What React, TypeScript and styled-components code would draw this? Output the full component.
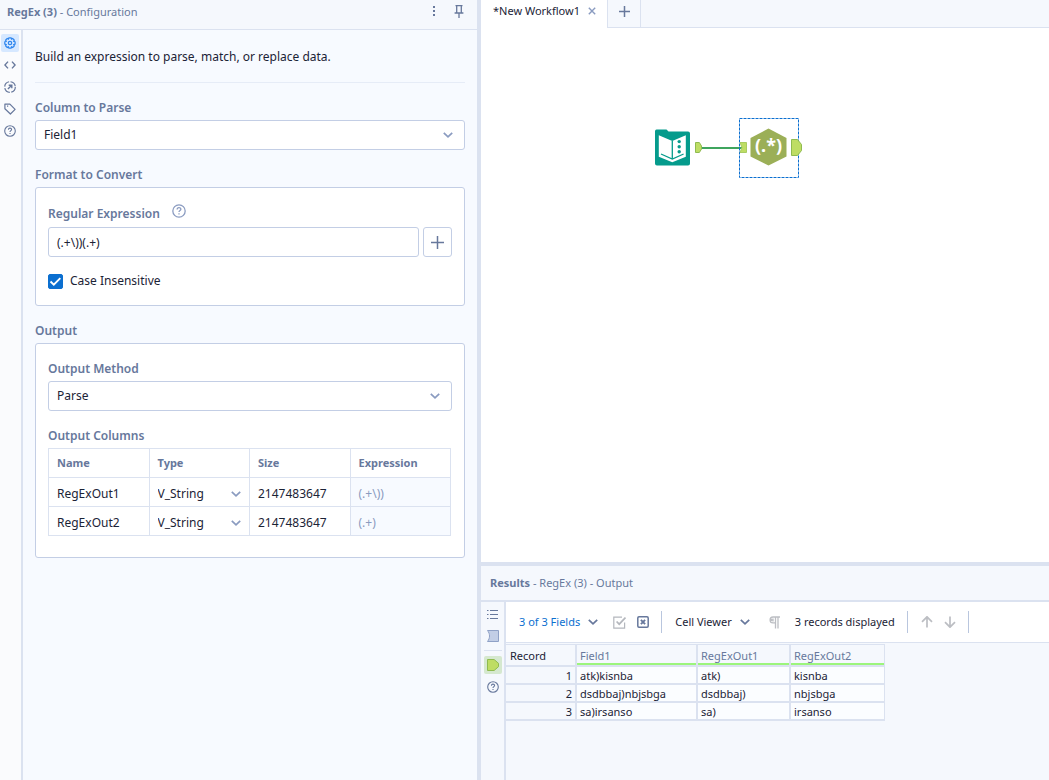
import React, { useState } from "react";
import styled, { createGlobalStyle, css } from "styled-components";

const c = {
  line: "#dbe2f0",
  field: "#c3cee5",
  panel: "#f5f8fd",
  pane: "#f7faff",
  label: "#67789c",
  text: "#1b2336",
  muted: "#8a9bc0",
  blue: "#0b6fd0",
};

const GlobalStyle = createGlobalStyle`
  * { box-sizing: border-box; }
  body {
    margin: 0;
    color: ${c.text};
    background: ${c.panel};
    font-family: "Noto Sans", "Open Sans", sans-serif;
    font-size: 12px;
    line-height: 18px;
  }
  button, input, select { font: inherit; color: inherit; margin: 0; }
  svg { display: block; flex: none; }
`;

const Page = styled.div`
  display: flex;
  min-height: 100vh;
`;

/* ---------- configuration panel ---------- */

const ConfigPanel = styled.section`
  flex: 0 0 481px;
  display: flex;
  flex-direction: column;
  border-right: 4px solid ${c.line};
  background: ${c.pane};
`;

const ConfigHeader = styled.header`
  display: flex;
  align-items: center;
  gap: 18px;
  height: 30px;
  padding: 0 13px 6px 7px;
  border-bottom: 1px solid ${c.line};
  background: ${c.panel};
  color: ${c.label};
`;

const PanelTitle = styled.h2`
  flex: 1;
  margin: 0;
  font-size: 11px;
  font-weight: 400;
  strong { font-weight: 700; }
`;

const IconButton = styled.button<{ $color?: string }>`
  display: flex;
  align-items: center;
  justify-content: center;
  padding: 0;
  border: 0;
  background: none;
  color: ${(p) => p.$color ?? c.label};
`;

const ConfigBody = styled.div`
  flex: 1;
  display: flex;
`;

const Rail = styled.nav<{ $wide?: boolean }>`
  display: flex;
  flex-direction: column;
  align-items: center;
  gap: 4px;
  flex: none;
  width: ${(p) => (p.$wide ? 25 : 23)}px;
  padding: ${(p) => (p.$wide ? "3px 0 0" : "4px 2px 0 0")};
  border-right: 2px solid ${c.line};
  background: ${(p) => (p.$wide ? c.panel : "#fafbfd")};
`;

const RailButton = styled(IconButton)<{ $tint?: string }>`
  width: 18px;
  height: 18px;
  border-radius: 2px;
  background: ${(p) => p.$tint ?? "none"};
`;

const RailRule = styled.hr`
  width: 18px;
  margin: 1px 0;
  border: 0;
  border-top: 1px solid ${c.line};
`;

const Form = styled.form`
  flex: 1;
  min-width: 0;
  padding: 17px 12px;
`;

const Intro = styled.p`
  margin: 0 0 16px;
  padding-bottom: 15px;
  border-bottom: 1px solid #e6ecf7;
  line-height: 20px;
`;

const labelText = css`
  display: block;
  margin: 0 0 3px;
  padding: 0;
  color: ${c.label};
  font-size: 12px;
  font-weight: 600;
  line-height: 18px;
`;

const Label = styled.label`${labelText}`;
const Heading = styled.h3`${labelText}`;

const LabelRow = styled.div`
  display: flex;
  align-items: flex-start;
  gap: 12px;
  height: 23px;
  label { padding-top: 1px; }
`;

const Group = styled.section`
  margin-bottom: 16px;
`;

const Card = styled.div`
  padding: 15px 12px;
  border: 1px solid ${c.field};
  border-radius: 3px;
  background: #fff;
  padding: 16px 12px 15px;
`;

const SelectWrap = styled.div`
  position: relative;
  margin-bottom: 16px;
  svg {
    position: absolute;
    right: 12px;
    top: 10px;
    pointer-events: none;
    color: ${c.muted};
  }
`;

const box = css`
  height: 30px;
  padding: 0 8px;
  border: 1px solid ${c.field};
  border-radius: 3px;
  background: #fff;
`;

const Select = styled.select`
  ${box}
  display: block;
  width: 100%;
  appearance: none;
`;

const InputRow = styled.div`
  display: flex;
  gap: 4px;
  margin-bottom: 15px;
`;

const TextInput = styled.input`
  ${box}
  flex: 1;
  min-width: 0;
`;

const AddButton = styled.button`
  ${box}
  display: flex;
  align-items: center;
  justify-content: center;
  width: 29px;
  padding: 0;
  color: ${c.label};
`;

const CheckLabel = styled.label`
  display: flex;
  align-items: center;
  gap: 7px;
  height: 18px;
`;

const Checkbox = styled.input`
  appearance: none;
  width: 15px;
  height: 15px;
  border-radius: 2px;
  background: #fff;
  border: 1px solid ${c.field};
  &:checked {
    border-color: ${c.blue};
    background: ${c.blue};
  }
`;

const CheckBoxHolder = styled.span`
  position: relative;
  display: flex;
  color: #fff;
  svg { position: absolute; left: 0; top: 0; pointer-events: none; }
`;

const ColumnsTable = styled.table`
  width: calc(100% - 1px);
  margin-bottom: 6px;
  border-collapse: collapse;
  table-layout: fixed;
  th, td {
    height: 29px;
    padding: 0 8px;
    border: 1px solid ${c.line};
    text-align: left;
  }
  th { color: ${c.label}; font-size: 11px; font-weight: 700; }
  td { padding-top: 4px; }
  td:last-child { background: ${c.pane}; color: ${c.muted}; }
`;

const CellInput = styled.input`
  display: block;
  width: 100%;
  padding: 0;
  border: 0;
  background: none;
`;

const CellSelect = styled.div`
  position: relative;
  select {
    display: block;
    width: 100%;
    padding: 0;
    border: 0;
    appearance: none;
    background: none;
  }
  svg {
    position: absolute;
    right: 0;
    top: 4px;
    pointer-events: none;
    color: ${c.muted};
  }
`;

/* ---------- workflow ---------- */

const Main = styled.main`
  flex: 1;
  min-width: 0;
  display: flex;
  flex-direction: column;
`;

const TabBar = styled.div`
  display: flex;
  height: 28px;
  background: ${c.panel};
`;

const Tab = styled.div`
  display: flex;
  align-items: flex-start;
  gap: 8px;
  padding: 2px 11px 0 12px;
  background: #fff;
  font-size: 11px;
  button { height: 18px; }
`;

const NewTab = styled.button`
  display: flex;
  align-items: center;
  justify-content: center;
  width: 34px;
  padding: 0 0 4px;
  border: solid ${c.line};
  border-width: 0 1px 1px;
  background: ${c.panel};
  color: ${c.label};
`;

const TabFill = styled.div`
  flex: 1;
  border-bottom: 1px solid ${c.line};
`;

const Canvas = styled.div`
  position: relative;
  flex: 1;
  min-height: 200px;
  background: #fff;
`;

const Item = styled.div<{ $x: number; $y: number }>`
  position: absolute;
  left: ${(p) => p.$x}px;
  top: ${(p) => p.$y}px;
`;

/* ---------- results ---------- */

const Results = styled.section`
  display: flex;
  flex-direction: column;
  height: 218px;
  border-top: 4px solid ${c.line};
  background: ${c.panel};
`;

const ResultsHeader = styled.header`
  display: flex;
  align-items: center;
  height: 36px;
  padding: 0 9px;
  border-bottom: 2px solid ${c.line};
  color: ${c.label};
`;

const ResultsBody = styled.div`
  flex: 1;
  display: flex;
`;

const ResultsMain = styled.div`
  flex: 1;
  min-width: 0;
`;

const Toolbar = styled.div`
  display: flex;
  align-items: center;
  height: 41px;
  padding: 0 13px;
  border-bottom: 1px solid ${c.line};
  background: #fff;
  font-size: 11px;
  white-space: nowrap;
`;

const DropButton = styled.button<{ $accent?: boolean }>`
  display: flex;
  align-items: center;
  gap: 8px;
  margin-right: 4px;
  padding: 0;
  border: 0;
  background: none;
  color: ${(p) => (p.$accent ? c.blue : c.text)};
  svg { color: ${c.label}; }
`;

const ToolGroup = styled.div<{ $gap: number }>`
  display: flex;
  align-items: center;
  gap: ${(p) => p.$gap}px;
  padding-right: 12px;
  margin-right: 13px;
  height: 22px;
  border-right: 1px solid #b9c6de;
`;

const DataTable = styled.table`
  margin-top: 1px;
  border-collapse: separate;
  border-spacing: 0;
  table-layout: fixed;
  width: 379px;
  font-size: 11px;
  line-height: 15px;
  th, td {
    height: 18px;
    padding: 1px 3px 0;
    border: solid ${c.line};
    border-width: 0 2px 2px 0;
    background: #fbfdff;
    text-align: left;
    font-weight: 400;
    overflow: hidden;
  }
  thead th {
    height: 23px;
    border-top-width: 1px;
    background: ${c.panel};
    color: ${c.label};
    box-shadow: inset 0 -2px 0 #9cf57c;
  }
  thead th:first-child { padding-left: 4px; color: ${c.text}; box-shadow: none; }
  tbody th { background: ${c.panel}; text-align: right; }
  th:last-child, td:last-child { border-right-width: 1px; }
`;

/* ---------- icons ---------- */

const Svg = ({ w = 12, h = w, sw = 1.3, children }: { w?: number; h?: number; sw?: number; children: React.ReactNode }) => (
  <svg width={w} height={h} viewBox={`0 0 ${w} ${h}`} fill="none" stroke="currentColor" strokeWidth={sw} aria-hidden="true">
    {children}
  </svg>
);

const Chevron = () => (
  <Svg w={10} sw={1.7}><path d="M.8 2.8 5 6.900 9.200 2.800" /></Svg>
);
const Plus = ({ size = 13 }: { size?: number }) => (
  <Svg w={size} sw={1.5}><path d={`M${size / 2} 0V${size}M0 ${size / 2}H${size}`} /></Svg>
);
const Help = ({ size = 12 }: { size?: number }) => (
  <svg width={size} height={size} viewBox="0 0 12 12" fill="none" stroke="currentColor" strokeWidth="1.1" aria-hidden="true">
    <circle cx="6" cy="6" r="5.3" />
    <path d="M4.4 4.8c0-2.3 3.2-2.1 3.2-.3 0 1.1-1.6 1.1-1.6 2.4M6 7.9v1.2" />
  </svg>
);
const Gear = () => (
  <Svg w={12} sw={1.2}>
    <path d="M4.9.8h2.2l.4 1.3 1.2-.6 1.6 1.6-.6 1.2 1.4.5v2.3l-1.4.5.6 1.2-1.6 1.6-1.2-.6-.4 1.4H4.900l-.5-1.400-1.200.6-1.600-1.600.6-1.200-1.400-.5V4.800l1.400-.5-.6-1.200 1.600-1.600 1.200.6z" />
    <circle cx="6" cy="6" r="1.7" />
  </Svg>
);
const Code = () => (
  <Svg w={12} sw={1.4}><path d="M4 2.6.9 6 4 9.4M8 2.6 11.100 6 8 9.4" /></Svg>
);
const Target = () => (
  <Svg w={12} sw={1.2}>
    <circle cx="6" cy="6" r="5.3" strokeDasharray="6.800 1.5" />
    <path d="M3.900 8.100 7.500 4.500M4.700 4.200h3.100v3.100" strokeWidth="1.4" />
  </Svg>
);
const Tag = () => (
  <Svg w={12} sw={1.2}><path d="M.9 1.100h5l5.200 5.200-4.700 4.700L.9 5.800z" strokeLinejoin="round" /><path d="M3 3.200h1.200" /></Svg>
);
const Pin = () => (
  <Svg w={10} h={13} sw={1.3}><path d="M1.500.7h7M2.700.7v7M7.300.7v7M.6 8h8.800M5 8v5" /></Svg>
);
const Dots = () => (
  <svg width="4" height="11" viewBox="0 0 4 11" fill="currentColor" aria-hidden="true">
    <path d="M1 0h2v2H1zM1 4h2v2H1zM1 8h2v2H1z" />
  </svg>
);
const Close = () => (
  <Svg w={8} sw={1.4}><path d="m.8.8 6.400 6.400M7.200.8.8 7.200" /></Svg>
);
const Tick = () => (
  <Svg w={15} sw={1.9}><path d="m2.500 7.500 3.300 3.200 6.500-6.500" /></Svg>
);
const List = () => (
  <Svg w={11} sw={1.1}><path d="M0 1.500h1.500M3 1.500h8M0 5.500h1.500M3 5.500h8M0 9.500h1.500M3 9.500h8" /></Svg>
);
const InAnchor = () => (
  <svg width="12" height="12" viewBox="0 0 12 12" fill="#c2cee6" stroke="#8fa1c6" aria-hidden="true">
    <path d="M.5.5h11v11H.5c2.700-3.500 2.700-7.500 0-11z" />
  </svg>
);
const OutAnchor = ({ w, h }: { w: number; h: number }) => (
  <svg width={w} height={h} viewBox={`0 0 ${w} ${h}`} fill="#bedd64" stroke="#8fbb50" aria-hidden="true">
    <path d={`M.5.5h${w * 0.55}L${w - 0.5} ${h * 0.36}v${h * 0.28}L${w * 0.55 + 0.5} ${h - 0.5}H.5z`} />
  </svg>
);
const EditCheck = () => (
  <Svg w={13} sw={1.2}><path d="M9 1.100H.8v11h10.800V6.500" /><path d="m3.600 5.500 2.600 2.700 6.300-6.700" strokeWidth="1.7" /></Svg>
);
const BoxX = () => (
  <Svg w={12} sw={1.5}><rect x=".8" y=".8" width="10.400" height="10.400" rx="1.200" /><path d="m3.900 3.900 4.200 4.200M8.100 3.900 3.900 8.100" strokeWidth="1.900" /></Svg>
);
const Pilcrow = () => (
  <Svg w={11} h={13} sw={1.3}><path d="M11 1H4a2.800 2.800 0 0 0 0 5.800h2.300M6.500 1v11.500M9 1v11.500M4 2.500v3M2.600 2.800v2.200" /></Svg>
);
const Arrow = ({ down }: { down?: boolean }) => (
  <Svg w={12} sw={1.7}><path d={down ? "M6 .5v10.500M1 6.200l5 5 5-5" : "M6 11.500V1M1 5.800l5-5 5 5"} /></Svg>
);

const InputTool = () => (
  <svg width="37" height="37" viewBox="0 0 37 37" aria-label="Text Input tool" role="img">
    <path d="M2.500.5h10l2 2h19.500q2 0 2 2v30q0 2-2 2h-31q-2 0-2-2v-32q0-2 1.500-2z" fill="#059b8c" />
    <path d="M4.800 6.200 18.300 12 31.800 6.200v21.500L18.300 33.300 4.800 27.700z" fill="#fff" />
    <path d="M7 25l11.300 5 11.300-5M18.300 12v18" fill="none" stroke="#059b8c" strokeWidth="1.300" />
    <g fill="#059b8c"><circle cx="25.200" cy="12.600" r="1.700" /><circle cx="25.200" cy="17.700" r="1.700" /><circle cx="25.200" cy="22.800" r="1.700" /></g>
  </svg>
);

const RegexTool = () => (
  <svg width="64" height="60" viewBox="0 0 64 60" aria-label="RegEx tool" role="img">
    <rect x=".5" y=".5" width="59" height="59" fill="none" stroke="#0b6fd0" strokeDasharray="3 1" />
    <path d="M1 24.500h6.500v10H1l2-5z" fill="#bedd64" stroke="#a9cc62" />
    <path d="M29.500 10.500 47.500 20v18.500L29.500 47.500 11.500 38.500V20z" fill="#9baf57" />
    <text x="29.500" y="34" textAnchor="middle" fill="#fff" fontSize="18" fontWeight="700" fontFamily="Noto Sans, sans-serif">(.*)</text>
    <path d="M52.500 21.500h6l4 5v6l-4 5h-6z" fill="#bedd64" stroke="#8fbb50" />
  </svg>
);

/* ---------- data ---------- */

const outputs = [
  { name: "RegExOut1", size: "2147483647", expr: "(.+\\))" },
  { name: "RegExOut2", size: "2147483647", expr: "(.+)" },
];

const records = [
  ["atk)kisnba", "atk)", "kisnba"],
  ["dsdbbaj)nbjsbga", "dsdbbaj)", "nbjsbga"],
  ["sa)irsanso", "sa)", "irsanso"],
];

export default function App() {
  const [pattern, setPattern] = useState("(.+\\))(.+)");
  const [insensitive, setInsensitive] = useState(true);

  return (
    <Page>
      <GlobalStyle />
      <ConfigPanel>
        <ConfigHeader>
          <PanelTitle><strong>RegEx (3)</strong> - Configuration</PanelTitle>
          <IconButton aria-label="More options"><Dots /></IconButton>
          <IconButton aria-label="Pin panel"><Pin /></IconButton>
        </ConfigHeader>
        <ConfigBody>
          <Rail>
            <RailButton aria-label="Configuration" $tint="#d6e8ff" $color="#2f86ee"><Gear /></RailButton>
            <RailButton aria-label="XML"><Code /></RailButton>
            <RailButton aria-label="Navigation"><Target /></RailButton>
            <RailButton aria-label="Annotation"><Tag /></RailButton>
            <RailButton aria-label="Help"><Help /></RailButton>
          </Rail>
          <Form onSubmit={(e) => e.preventDefault()}>
            <Intro>Build an expression to parse, match, or replace data.</Intro>
            <Label htmlFor="column">Column to Parse</Label>
            <SelectWrap>
              <Select id="column"><option>Field1</option></Select>
              <Chevron />
            </SelectWrap>
            <Group>
              <Heading>Format to Convert</Heading>
              <Card>
                <LabelRow>
                  <Label htmlFor="regex">Regular Expression</Label>
                  <IconButton type="button" aria-label="Regular expression help" $color={c.muted}><Help size={14} /></IconButton>
                </LabelRow>
                <InputRow>
                  <TextInput id="regex" value={pattern} onChange={(e) => setPattern(e.target.value)} />
                  <AddButton type="button" aria-label="Add expression"><Plus /></AddButton>
                </InputRow>
                <CheckLabel>
                  <CheckBoxHolder>
                    <Checkbox type="checkbox" checked={insensitive} onChange={(e) => setInsensitive(e.target.checked)} />
                    {insensitive && <Tick />}
                  </CheckBoxHolder>
                  Case Insensitive
                </CheckLabel>
              </Card>
            </Group>
            <Group>
              <Heading>Output</Heading>
              <Card>
                <Label htmlFor="method">Output Method</Label>
                <SelectWrap>
                  <Select id="method"><option>Parse</option></Select>
                  <Chevron />
                </SelectWrap>
                <Heading id="columns-title">Output Columns</Heading>
                <ColumnsTable aria-labelledby="columns-title">
                  <thead>
                    <tr><th>Name</th><th>Type</th><th>Size</th><th>Expression</th></tr>
                  </thead>
                  <tbody>
                    {outputs.map((o) => (
                      <tr key={o.name}>
                        <td><CellInput aria-label="Name" defaultValue={o.name} /></td>
                        <td>
                          <CellSelect>
                            <select aria-label="Type"><option>V_String</option></select>
                            <Chevron />
                          </CellSelect>
                        </td>
                        <td><CellInput aria-label="Size" defaultValue={o.size} /></td>
                        <td>{o.expr}</td>
                      </tr>
                    ))}
                  </tbody>
                </ColumnsTable>
              </Card>
            </Group>
          </Form>
        </ConfigBody>
      </ConfigPanel>

      <Main>
        <TabBar>
          <Tab>
            *New Workflow1
            <IconButton aria-label="Close tab" $color={c.muted}><Close /></IconButton>
          </Tab>
          <NewTab aria-label="New workflow"><Plus size={11} /></NewTab>
          <TabFill />
        </TabBar>
        <Canvas>
          <Item $x={173} $y={101}><InputTool /></Item>
          <Item $x={214} $y={114}><OutAnchor w={7} h={11} /></Item>
          <Item $x={221} $y={119}>
            <svg width="40" height="2" aria-hidden="true"><rect width="40" height="2" fill="#3fa55e" /></svg>
          </Item>
          <Item $x={258} $y={90}><RegexTool /></Item>
        </Canvas>
        <Results>
          <ResultsHeader>
            <PanelTitle><strong>Results</strong> - RegEx (3) - Output</PanelTitle>
          </ResultsHeader>
          <ResultsBody>
            <Rail $wide>
              <RailButton aria-label="Messages"><List /></RailButton>
              <RailButton aria-label="Input data"><InAnchor /></RailButton>
              <RailRule />
              <RailButton aria-label="Output data" $tint="#d5e8cf"><OutAnchor w={12} h={12} /></RailButton>
              <RailButton aria-label="Help"><Help /></RailButton>
            </Rail>
            <ResultsMain>
              <Toolbar>
                <ToolGroup $gap={11}>
                  <DropButton $accent>3 of 3 Fields <Chevron /></DropButton>
                  <IconButton aria-label="Select all" $color="#b4b7bd"><EditCheck /></IconButton>
                  <IconButton aria-label="Deselect all"><BoxX /></IconButton>
                </ToolGroup>
                <ToolGroup $gap={15}>
                  <DropButton>Cell Viewer <Chevron /></DropButton>
                  <IconButton aria-label="Show whitespace" $color="#bcbec3"><Pilcrow /></IconButton>
                  <span>3 records displayed</span>
                </ToolGroup>
                <ToolGroup $gap={11}>
                  <IconButton aria-label="Previous" $color="#bcbec3"><Arrow /></IconButton>
                  <IconButton aria-label="Next" $color="#bcbec3"><Arrow down /></IconButton>
                </ToolGroup>
              </Toolbar>
              <DataTable>
                <colgroup>
                  <col style={{ width: 71 }} /><col style={{ width: 121 }} /><col style={{ width: 93 }} /><col />
                </colgroup>
                <thead>
                  <tr><th>Record</th><th>Field1</th><th>RegExOut1</th><th>RegExOut2</th></tr>
                </thead>
                <tbody>
                  {records.map((r, i) => (
                    <tr key={i}>
                      <th scope="row">{i + 1}</th>
                      {r.map((v, j) => <td key={j}>{v}</td>)}
                    </tr>
                  ))}
                </tbody>
              </DataTable>
            </ResultsMain>
          </ResultsBody>
        </Results>
      </Main>
    </Page>
  );
}
